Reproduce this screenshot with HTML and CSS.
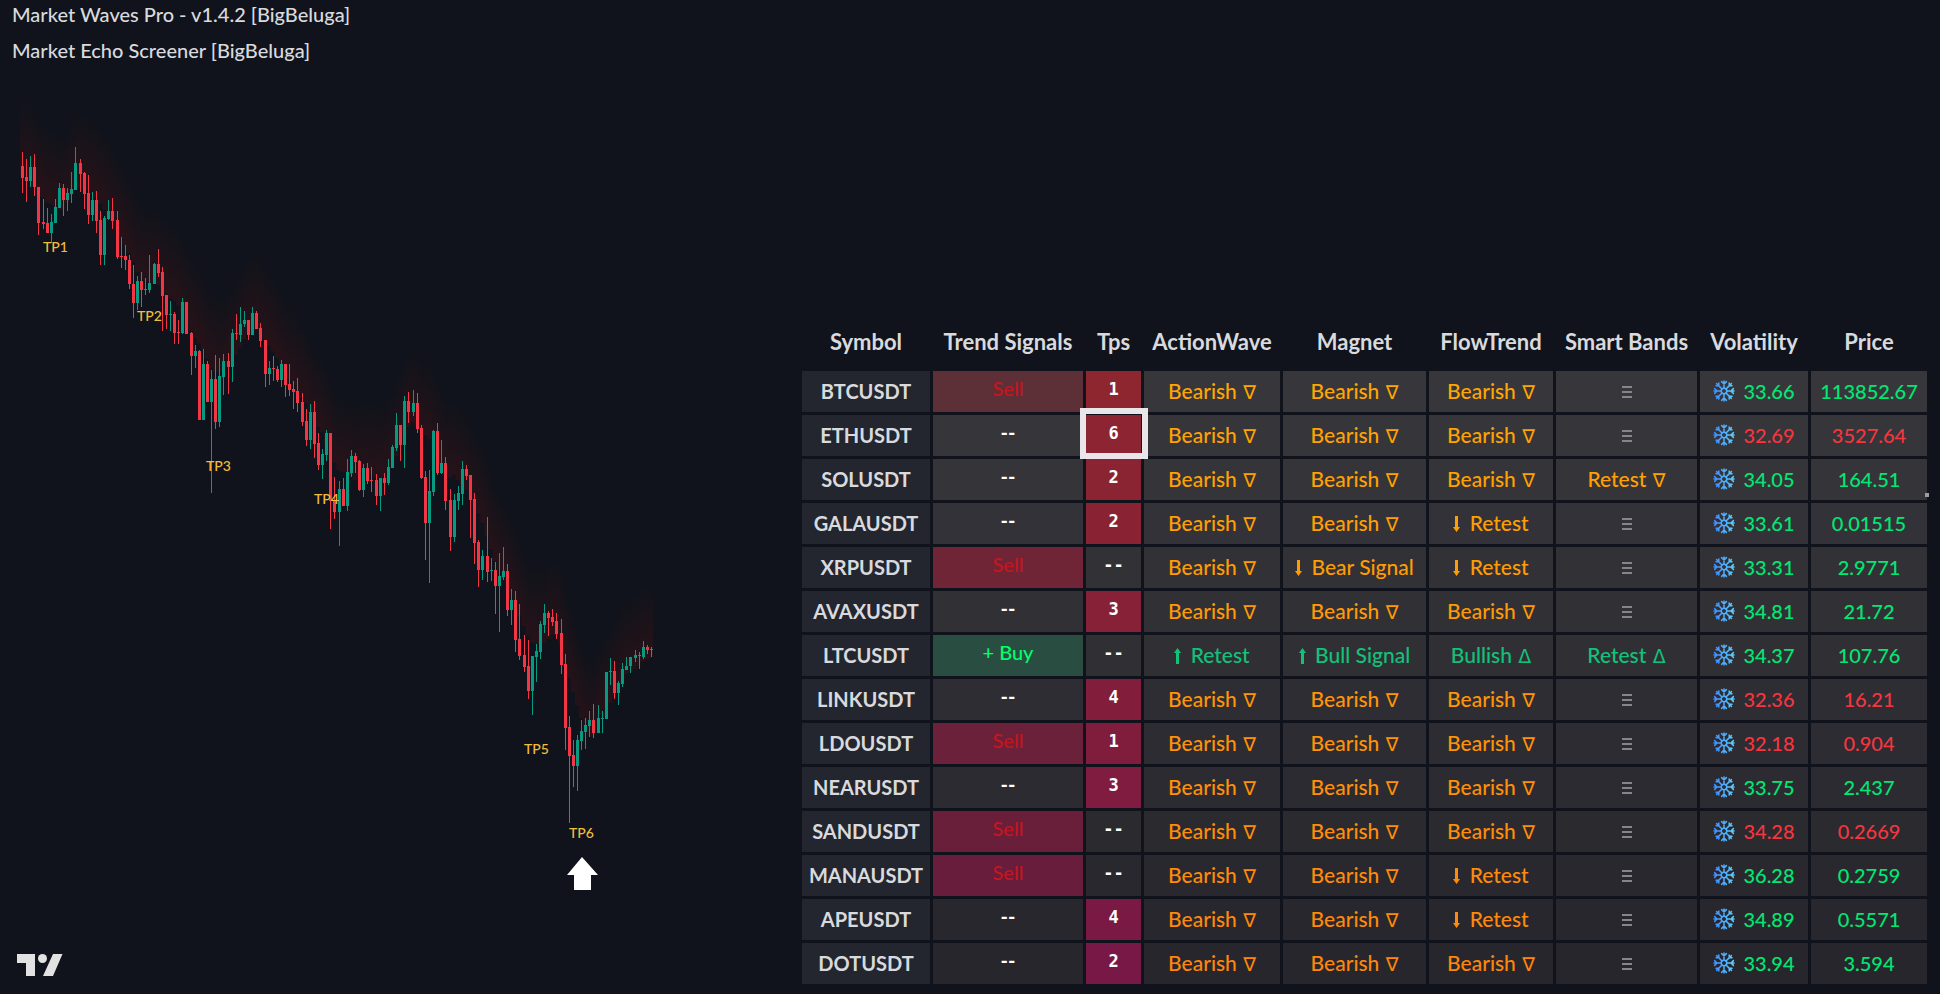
FILE: index.html
```html
<!DOCTYPE html>
<html lang="en">
<head>
    <meta charset="UTF-8">
    <meta name="viewport" content="width=device-width, initial-scale=1.0">
    <title>Market Echo Screener</title>
    <link rel="stylesheet" href="styles.css">
</head>
<body>
    <!-- shared icons -->
    <svg class="sprite" aria-hidden="true">
        <defs>
            <linearGradient id="ice" gradientUnits="userSpaceOnUse" x1="-10" y1="0" x2="10" y2="0">
                <stop offset="0" stop-color="#3f8cff"/>
                <stop offset="1" stop-color="#5ccfff"/>
            </linearGradient>
            <symbol id="icon-down" viewBox="0 0 7 16">
                <path d="M2 0h3v11h2l-3.500 5L0 11h2z"/>
            </symbol>
            <symbol id="icon-up" viewBox="0 0 7 16">
                <path d="M2 16h3V5h2L3.500 0 0 5h2z"/>
            </symbol>
            <symbol id="icon-flat" viewBox="0 0 10 12">
                <path d="M0 0h10v2H0zM0 5h10v2H0zM0 10h10v2H0z"/>
            </symbol>
            <symbol id="icon-snow" viewBox="-11 -11 22 22">
                <g fill="none" stroke="url(#ice)" stroke-width="1.5" stroke-linecap="round">
                    <circle r="2.8"/>
                    <path d="M0-2.8V-10M-2.4-9.4 0-7 2.4-9.4M0 2.8V10M-2.4 9.4 0 7 2.4 9.4M2.8 0H10M9.4-2.4 7 0 9.4 2.4M-2.8 0H-10M-9.4-2.4-7 0-9.4 2.4"/>
                    <path d="M2-2 7.4-7.4M2 2 7.4 7.4M-2-2-7.4-7.4M-2 2-7.4 7.4M5.2-8V-5.2H8M5.2 8V5.2H8M-5.2-8V-5.2H-8M-5.2 8V5.2H-8"/>
                </g>
            </symbol>
        </defs>
    </svg>

    <main class="layout">
        <section class="chart-panel">
            <div class="indicators">
                <div>Market Waves Pro - v1.4.2 [BigBeluga]</div>
                <div>Market Echo Screener [BigBeluga]</div>
            </div>
            <svg class="chart" viewBox="0 68 799 860" role="img" aria-label="Price chart">
                <defs>
                    <linearGradient id="haze" x1="0" y1="0" x2="0" y2="1">
                        <stop offset="0" stop-color="#6e1010" stop-opacity="0"/>
                        <stop offset="1" stop-color="#6e1010" stop-opacity=".24"/>
                    </linearGradient>
                </defs>
                <g id="glow" fill="url(#haze)"></g>
                <g id="candles" shape-rendering="crispEdges"></g>
                <g class="tp">
                    <text x="43" y="252">TP1</text>
                    <text x="137" y="321">TP2</text>
                    <text x="206" y="471">TP3</text>
                    <text x="314" y="504">TP4</text>
                    <text x="524" y="754">TP5</text>
                    <text x="569" y="838">TP6</text>
                </g>
                <path fill="#fff" d="M582 857l16 18h-7v15h-17v-15h-7z"/>
            </svg>
            <div class="brand">
                <svg width="46" height="24" viewBox="0 0 46 24" role="img" aria-label="TradingView">
                    <path d="M0 1h18v22H9V10H0zM36 1h9.500L36 23H26z"/>
                    <circle cx="25.500" cy="5.500" r="4.500"/>
                </svg>
            </div>
        </section>

        <section class="screener-panel">
            <table class="screener">
                <colgroup>
                    <col class="c-symbol"><col class="c-trend"><col class="c-tps">
                    <col class="c-wave"><col class="c-magnet"><col class="c-flow">
                    <col class="c-bands"><col class="c-vol"><col class="c-price">
                </colgroup>
                <thead>
                    <tr>
                        <th>Symbol</th>
                        <th>Trend Signals</th>
                        <th>Tps</th>
                        <th>ActionWave</th>
                        <th>Magnet</th>
                        <th>FlowTrend</th>
                        <th>Smart Bands</th>
                        <th>Volatility</th>
                        <th>Price</th>
                    </tr>
                </thead>
                <tbody id="rows"></tbody>
            </table>
            <span class="handle"></span>
        </section>
    </main>

    <script src="script.js"></script>
</body>
</html>
```
FILE: styles.css
```css
* {
    box-sizing: border-box;
}
body {
    margin: 0;
    background: #10131b;
    color: #d9dade;
    font-family: Lato, "Liberation Sans", sans-serif;
    font-size: 20px;
    font-weight: 500;
}
.sprite {
    position: absolute;
    width: 0;
    height: 0;
}
.layout {
    display: grid;
    grid-template-columns: 799fr 1131fr;
    padding-right: 10px;
    min-height: 100vh;
}

/* chart side */
.chart-panel {
    display: flex;
    flex-direction: column;
}
.indicators {
    padding: 0 12px;
    line-height: 36px;
    margin-top: -4px;
}
.chart {
    display: block;
    width: 100%;
}
.tp {
    fill: #f2bd3a;
    font-size: 14px;
}
.brand {
    padding: 25px 17px 0;
    line-height: 24px;
    fill: #e2e2e2;
}

/* screener table */
.screener-panel {
    position: relative;
    align-self: end;
    padding-bottom: 7px;
}
.screener {
    width: 100%;
    table-layout: fixed;
    border-spacing: 3px;
    text-align: center;
    white-space: nowrap;
}
.c-symbol { width: 128px; }
.c-trend { width: 150px; }
.c-tps { width: 55px; }
.c-wave { width: 136px; }
.c-magnet { width: 143px; }
.c-flow { width: 124px; }
.c-bands { width: 141px; }
.c-vol { width: 108px; }
.c-price { width: 116px; }

.screener th,
.screener td {
    height: 41px;
    padding: 0 0 2px;
    line-height: 24px;
}
.screener thead th {
    height: 50px;
    font-size: 22px;
    font-weight: bold;
}
.screener tbody td {
    background: color-mix(in srgb, #27262c var(--depth), #37363b);
}
.screener tbody th {
    background: #23262e;
    font-weight: bold;
}
.screener .trend,
.screener .tps {
    color: #fff;
}
.screener .trend {
    padding-bottom: 8px;
    font-weight: bold;
}
.screener .trend.sell {
    background: color-mix(in srgb, #651b3c var(--depth), #752a35);
    color: #c4161f;
    font-weight: 500;
}
.screener .trend.weak {
    background: #5d2f37;
}
.screener .trend.buy {
    background: #2a4d42;
    color: #00ff6a;
    font-weight: 500;
}
.screener .tps {
    position: relative;
    padding-bottom: 6px;
    font: bold 17px/24px "DejaVu Sans Mono", monospace;
}
.screener .tps.hit {
    background: color-mix(in srgb, #781846 var(--depth), #8e262f);
}
.tps.marked::after {
    content: "";
    position: absolute;
    inset: -7px -7px -3px -6px;
    border: 6px solid #e9e6ea;
}
.bear {
    color: color-mix(in srgb, #ff860a var(--depth), #ffa600);
    font-size: 21px;
}
.bull {
    color: #12c27a;
    font-size: 21px;
}
.rise {
    color: #00e873;
}
.fall {
    color: #f5363f;
}
.mark {
    margin-left: 1px;
    font-family: "DejaVu Sans", sans-serif;
    font-size: 19px;
    line-height: 0;
}
.arrow {
    width: 7px;
    height: 16px;
    margin-right: 4px;
    vertical-align: -1px;
    fill: currentColor;
}
.flat {
    width: 10px;
    height: 12px;
    vertical-align: 1px;
    fill: #85858a;
}
.snow {
    width: 22px;
    height: 22px;
    margin-right: 8px;
    vertical-align: -3px;
}
.handle {
    position: absolute;
    right: 1px;
    bottom: 497px;
    width: 4px;
    height: 4px;
    background: #9b9ba0;
}
```
FILE: script.js
```js
// symbol, trend, tps, wave, magnet, flow, bands, volatility, price, up/down
const rows = [
    ['BTCUSDT', 'Sell', '1', 'Bearish', 'Bearish', 'Bearish', '', '33.66', '113852.67', 1],
    ['ETHUSDT', '--', '6', 'Bearish', 'Bearish', 'Bearish', '', '32.69', '3527.64', 0],
    ['SOLUSDT', '--', '2', 'Bearish', 'Bearish', 'Bearish', 'Retest-', '34.05', '164.51', 1],
    ['GALAUSDT', '--', '2', 'Bearish', 'Bearish', 'Retest', '', '33.61', '0.01515', 1],
    ['XRPUSDT', 'Sell', '--', 'Bearish', 'Bear Signal', 'Retest', '', '33.31', '2.9771', 1],
    ['AVAXUSDT', '--', '3', 'Bearish', 'Bearish', 'Bearish', '', '34.81', '21.72', 1],
    ['LTCUSDT', '+ Buy', '--', 'Retest up', 'Bull Signal', 'Bullish', 'Retest+', '34.37', '107.76', 1],
    ['LINKUSDT', '--', '4', 'Bearish', 'Bearish', 'Bearish', '', '32.36', '16.21', 0],
    ['LDOUSDT', 'Sell', '1', 'Bearish', 'Bearish', 'Bearish', '', '32.18', '0.904', 0],
    ['NEARUSDT', '--', '3', 'Bearish', 'Bearish', 'Bearish', '', '33.75', '2.437', 1],
    ['SANDUSDT', 'Sell', '--', 'Bearish', 'Bearish', 'Bearish', '', '34.28', '0.2669', 0],
    ['MANAUSDT', 'Sell', '--', 'Bearish', 'Bearish', 'Retest', '', '36.28', '0.2759', 1],
    ['APEUSDT', '--', '4', 'Bearish', 'Bearish', 'Retest', '', '34.89', '0.5571', 1],
    ['DOTUSDT', '--', '2', 'Bearish', 'Bearish', 'Bearish', '', '33.94', '3.594', 1]
];

const icon = (name, cls) => `<svg class="${cls}" aria-hidden="true"><use href="#icon-${name}"/></svg>`;
const down = '<span class="mark">∇</span>';
const up = '<span class="mark">Δ</span>';

const states = {
    '': `<td>${icon('flat', 'flat')}</td>`,
    'Bearish': `<td class="bear">Bearish ${down}</td>`,
    'Bullish': `<td class="bull">Bullish ${up}</td>`,
    'Retest-': `<td class="bear">Retest ${down}</td>`,
    'Retest+': `<td class="bull">Retest ${up}</td>`,
    'Retest': `<td class="bear">${icon('down', 'arrow')} Retest</td>`,
    'Retest up': `<td class="bull">${icon('up', 'arrow')} Retest</td>`,
    'Bear Signal': `<td class="bear">${icon('down', 'arrow')} Bear Signal</td>`,
    'Bull Signal': `<td class="bull">${icon('up', 'arrow')} Bull Signal</td>`
};

document.getElementById('rows').innerHTML = rows.map((r, i) => {
    const [symbol, trend, tps, wave, magnet, flow, bands, vol, price, rising] = r;
    const depth = Math.round(i / (rows.length - 1) * 100);
    let trendClass = 'trend';
    if (trend === 'Sell') trendClass += ' sell';
    if (trend === '+ Buy') trendClass += ' buy';
    if (i === 0) trendClass += ' weak';
    let tpsClass = 'tps';
    if (tps !== '--') tpsClass += ' hit';
    if (tps === '6') tpsClass += ' marked';
    const dir = rising ? 'rise' : 'fall';
    return `<tr style="--depth: ${depth}%">
        <th scope="row">${symbol}</th>
        <td class="${trendClass}">${trend}</td>
        <td class="${tpsClass}">${tps}</td>
        ${states[wave]}${states[magnet]}${states[flow]}${states[bands]}
        <td class="${dir}">${icon('snow', 'snow')}${vol}</td>
        <td class="${dir}">${price}</td>
    </tr>`;
}).join('');

// candles: colour, high, body top, body bottom, low (thirds of a pixel, from the base level)
const series = [
    { base: 0, bars: `r457,498,533,580 r478,532,543,606 g468,501,542,560 r461,501,562,588 r561,561,668,706
        r597,666,671,687 r624,669,698,700 g642,667,698,728 g598,621,668,668 g548,564,623,623 r552,564,600,647
        g564,579,600,633 g516,567,581,608 g442,489,570,570 r476,489,521,575 r516,519,581,627 r525,579,645,672
        g576,600,645,662 r572,600,662,700 r633,660,765,795 g648,654,765,795 g600,633,657,660 r595,633,662,687
        r633,660,771,777 r711,768,771,804 r735,769,781,809 r765,780,853,866 r795,852,909,954 g828,843,909,929
        r816,843,870,920 g834,867,870,884 g765,849,870,879 g788,792,852,852 r747,792,819,832` },
    { base: 720, bars: `r80,96,168,272 r165,165,224,267 g182,222,225,272 r216,222,278,312 r240,276,279,312
        g174,186,279,282 r186,186,282,282 r276,279,348,405 g315,333,348,384 r330,333,540,540 g327,372,540,540
        r362,372,486,486 g390,417,486,758 r345,417,546,567 g354,408,546,560 g342,363,411,465 r339,363,381,461
        g267,279,381,425 r222,279,282,300 g201,252,285,306 g213,240,253,261 r240,240,285,300 g201,219,285,285
        r213,219,267,267 r249,264,303,321 r300,300,402,441 g363,384,402,435 r348,384,388,423 r378,387,420,425
        g360,372,420,441 r372,372,435,470 r372,432,450,468 r423,447,456,507 r414,453,489,515 r459,486,546,558
        r507,543,600,618 g492,516,600,627 r483,516,612,654 r579,609,675,690 g627,642,675,717 g570,579,645,662` },
    { base: 1110, bars: `r189,189,393,477 r320,390,426,447 g333,357,426,528 r324,357,408,408 g267,306,408,423
        g240,258,309,320 r249,258,276,308 r270,273,360,362 g282,294,360,381 r279,294,333,342 r291,330,333,366
        r312,330,378,405 g324,324,378,423 r309,324,339,375 g267,291,339,345 g226,231,293,293 g130,165,235,242
        r165,165,225,273 g78,93,225,294 r66,93,126,159 g60,99,126,138 r70,99,177,189 r165,174,324,327
        r303,321,459,570 g300,363,459,639 g180,183,366,378 r159,183,309,315 g210,279,309,312 r261,279,393,420
        r357,390,501,543 g372,390,501,516 g348,369,393,420 g273,297,372,405 r285,297,318,330 r315,315,390,504
        r369,387,519,582 r509,516,600,651 g540,558,600,630 r441,558,606,636 g563,600,603,633` },
    { base: 1440, bars: `r246,270,318,402 g219,288,318,456 g201,273,291,300 r252,273,390,408 g327,360,390,435
        r333,360,480,516 r372,477,528,540 r465,525,561,576 r480,558,633,657 g528,528,633,705 g492,513,531,606
        g423,432,516,537 g372,399,435,459 r393,399,414,468 r387,411,426,438 r399,423,462,477 r417,459,555,582
        r521,552,744,810 r708,741,828,1028 r780,825,858,921 g765,780,858,932 g720,753,783,810 g714,735,756,807
        g693,720,738,771 r672,720,759,774 g675,714,759,759 g693,714,717,759 g576,576,717,717 g534,573,576,615
        r543,573,639,657 g603,609,639,675 g549,567,612,620 g531,558,570,570 g531,531,558,579 g510,525,534,546
        r516,525,528,567 g483,501,531,537 r495,501,510,522 r501,507,510,531` }
];

const bars = series.flatMap(s => s.bars.split(/\s+/).map(bar => {
    const y = bar.slice(1).split(',').map(v => Math.round((s.base + Number(v)) / 3));
    return { color: bar[0] === 'g' ? '#089981' : '#f23645', y };
}));
const first = 22;
const step = 629 / (bars.length - 1);

let candles = '';
let glow = '';
bars.forEach((b, i) => {
    const x = first + Math.round(i * step);
    const [high, top, bottom, low] = b.y;
    candles += `<path fill="${b.color}" d="M${x} ${high}h1V${low}h-1zM${x - 1} ${top}h3v${Math.max(1, bottom - top)}h-3z"/>`;

    // haze follows the smoothed body tops
    const near = bars.slice(Math.max(0, i - 5), i + 3);
    const level = near.reduce((sum, n) => sum + n.y[1], 0) / near.length;
    glow += `<path d="M${first - 2 + i * step} ${level - 70}h${step + 0.1}v76h${-step - 0.1}z"/>`;
});
document.getElementById('candles').innerHTML = candles;
document.getElementById('glow').innerHTML = glow;
```
